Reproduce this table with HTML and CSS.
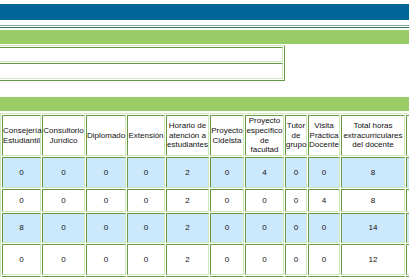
FILE: index.html
```html
<!DOCTYPE html>
<html lang="es">
<head>
<meta charset="utf-8">
<title>Horas extracurriculares</title>
<link rel="stylesheet" href="styles.css">
</head>
<body>
<div class="page">
  <div class="topbar"></div>
  <div class="rule"></div>
  <div class="greenbar"></div>
  <table class="form">
    <tr class="f1"><td></td></tr>
    <tr class="f2"><td></td></tr>
  </table>
  <div class="greenbar second"></div>
  <table class="data">
    <tr class="head">
      <td class="c1">Consejería Estudiantil</td>
      <td class="c2">Consultorio Jurídico</td>
      <td class="c3">Diplomado</td>
      <td class="c4">Extensión</td>
      <td class="c5">Horario de atención a estudiantes</td>
      <td class="c6">Proyecto Cidelsta</td>
      <td class="c7">Proyecto específico de facultad</td>
      <td class="c8">Tutor de grupo</td>
      <td class="c9">Visita Práctica Docente</td>
      <td class="c10">Total horas extracurriculares del docente</td>
      <td class="c11"></td>
    </tr>
    <tr class="r1 alt">
      <td>0</td><td>0</td><td>0</td><td>0</td><td>2</td><td>0</td><td>4</td><td>0</td><td>0</td><td>8</td><td></td>
    </tr>
    <tr class="r2">
      <td>0</td><td>0</td><td>0</td><td>0</td><td>2</td><td>0</td><td>0</td><td>0</td><td>4</td><td>8</td><td></td>
    </tr>
    <tr class="r3 alt">
      <td>8</td><td>0</td><td>0</td><td>0</td><td>2</td><td>0</td><td>0</td><td>0</td><td>0</td><td>14</td><td></td>
    </tr>
    <tr class="r4">
      <td>0</td><td>0</td><td>0</td><td>0</td><td>2</td><td>0</td><td>0</td><td>0</td><td>0</td><td>12</td><td></td>
    </tr>
    <tr class="r5 alt">
      <td></td><td></td><td></td><td></td><td></td><td></td><td></td><td></td><td></td><td></td><td></td>
    </tr>
  </table>
</div>
</body>
</html>
```

FILE: styles.css
```css
html, body {
  margin: 0;
  padding: 0;
  background: #ffffff;
  overflow: hidden;
}

.page {
  width: 409px;
  height: 277px;
  overflow: hidden;
  font-family: "Liberation Sans", Arial, sans-serif;
  font-size: 8px;
  color: #111111;
}

.topbar {
  margin-top: 4px;
  height: 16px;
  background: #006699;
}

.rule {
  margin-top: 5px;
  height: 1px;
  border-top: 1px solid #79a898;
  border-bottom: 1px solid #3c7358;
}

.greenbar {
  margin-top: 2px;
  height: 14px;
  background: #99cc66;
}

.greenbar.second {
  margin-top: 16px;
}

table {
  border-collapse: separate;
  border-spacing: 1px;
  border-style: solid;
  border-width: 1px;
  border-color: #d2e8bc #669944 #669944 #d2e8bc;
}

td {
  padding: 0;
  border-style: solid;
  border-width: 1px;
  border-color: #669944 #d2e8bc #d2e8bc #669944;
  box-sizing: border-box;
}

.form {
  margin-top: 1px;
  margin-left: -20px;
  width: 305px;
}

.form .f1 { height: 15px; }
.form .f2 { height: 16px; }

.data {
  margin-top: 2px;
  width: 448px;
  table-layout: fixed;
}

.data td {
  text-align: center;
  vertical-align: middle;
  line-height: 9.6px;
}

.data .head td {
  background: #ffffff;
}

.c1 { width: 39px; }
.c2 { width: 43px; }
.c3 { width: 40px; }
.c4 { width: 38px; }
.c5 { width: 43px; }
.c6 { width: 34px; }
.c7 { width: 39px; }
.c8 { width: 22px; }
.c9 { width: 32px; }
.c10 { width: 64px; }
.c11 { width: 40px; }

.data .head { height: 41px; }
.data .r1 { height: 31px; }
.data .r2 { height: 23px; }
.data .r3 { height: 30px; }
.data .r4 { height: 31px; }
.data .r5 { height: 31px; }

.data .alt td {
  background: #cce8fc;
}
```
